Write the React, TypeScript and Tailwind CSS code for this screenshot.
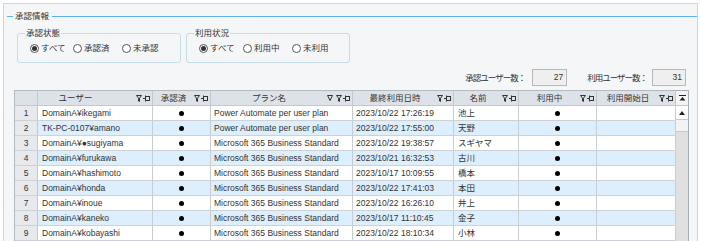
import React from "react";

type Row = { n: number; user: string; plan: string; last: string; name: string };

const PA = "Power Automate per user plan";
const MS = "Microsoft 365 Business Standard";

const rows: Row[] = [
  { n: 1, user: "DomainA¥ikegami", plan: PA, last: "2023/10/22 17:26:19", name: "池上" },
  { n: 2, user: "TK-PC-0107¥amano", plan: PA, last: "2023/10/22 17:55:00", name: "天野" },
  { n: 3, user: "DomainA¥●sugiyama", plan: MS, last: "2023/10/22 19:38:57", name: "スギヤマ" },
  { n: 4, user: "DomainA¥furukawa", plan: MS, last: "2023/10/21 16:32:53", name: "古川" },
  { n: 5, user: "DomainA¥hashimoto", plan: MS, last: "2023/10/17 10:09:55", name: "橋本" },
  { n: 6, user: "DomainA¥honda", plan: MS, last: "2023/10/22 17:41:03", name: "本田" },
  { n: 7, user: "DomainA¥inoue", plan: MS, last: "2023/10/22 16:26:10", name: "井上" },
  { n: 8, user: "DomainA¥kaneko", plan: MS, last: "2023/10/17 11:10:45", name: "金子" },
  { n: 9, user: "DomainA¥kobayashi", plan: MS, last: "2023/10/22 18:10:34", name: "小林" },
];

function Funnel() {
  return (
    <svg width="6" height="7" viewBox="0 0 6 7" fill="none" stroke="#333" strokeWidth="1">
      <path d="M0.5 0.5H5.5L3.5 3.2V6.5L2.5 6V3.2Z" />
    </svg>
  );
}

function Sort() {
  return (
    <svg width="6" height="6" viewBox="0 0 6 6" fill="none" stroke="#333" strokeWidth="1">
      <path d="M0.5 0.5H5.5L3 5.5Z" />
    </svg>
  );
}

function Pin() {
  return (
    <svg width="7" height="7" viewBox="0 0 7 7" fill="none" stroke="#333" strokeWidth="1">
      <path d="M0 3.5H2M2.5 0.5V6.5" />
      <rect x="2.5" y="1.5" width="4" height="4" />
    </svg>
  );
}

function Dot() {
  return <span className="block w-[5px] h-[5px] rounded-full bg-black" />;
}

function Radio({ label, checked, w }: { label: string; checked?: boolean; w?: string }) {
  return (
    <div className={`flex items-center ${w ?? ""}`}>
      <span className="w-[9px] h-[9px] rounded-full border border-[#555] bg-white flex items-center justify-center">
        {checked && <span className="w-[5px] h-[5px] rounded-full bg-[#333]" />}
      </span>
      <span className="ml-[2px] leading-[11px]">{label}</span>
    </div>
  );
}

function Group({ title, children }: { title: string; children: React.ReactNode }) {
  return (
    <div className="relative w-[164px] h-[30px] border border-[#c6dde8] rounded-[3px] flex items-center pl-[12px]">
      <span className="absolute left-[7px] -top-[7px] px-[1px] bg-[#f5f6f7] leading-[12px]">{title}</span>
      {children}
    </div>
  );
}

const cols = [
  { w: "w-[115px]", label: "ユーザー", sort: false, shift: "pr-[23px]" },
  { w: "w-[58px]", label: "承認済", sort: false, shift: "" },
  { w: "w-[142px]", label: "プラン名", sort: true, shift: "" },
  { w: "w-[101px]", label: "最終利用日時", sort: false, shift: "" },
  { w: "w-[65px]", label: "名前", sort: false, shift: "" },
  { w: "w-[78px]", label: "利用中", sort: false, shift: "" },
  { w: "w-[79px]", label: "利用開始日", sort: false, shift: "" },
];

export default function App() {
  return (
    <div className="w-[701px] h-[241px] overflow-hidden bg-white pt-[3px] px-[3px] text-[8.5px] text-[#333] font-['Liberation_Sans','Noto_Sans_CJK_JP',sans-serif]">
      <div className="border border-[#d2d4d6] bg-[#f5f6f7] pb-[20px]">
        {/* section title */}
        <div className="mt-[7px] h-[11px] flex items-center">
          <span className="ml-[3px] w-[6px] h-px bg-[#5fb0ee]" />
          <span className="ml-[2px] leading-[11px]">承認情報</span>
          <span className="ml-[3px] flex-1 h-px bg-[#5fb0ee]" />
        </div>

        {/* filter groups */}
        <div className="mt-[11px] ml-[13px] flex gap-[5px]">
          <Group title="承認状態">
            <Radio label="すべて" checked w="w-[43px]" />
            <Radio label="承認済" w="w-[49px]" />
            <Radio label="未承認" />
          </Group>
          <Group title="利用状況">
            <Radio label="すべて" checked w="w-[44px]" />
            <Radio label="利用中" w="w-[49px]" />
            <Radio label="未利用" />
          </Group>
        </div>

        {/* counts */}
        <div className="mt-[6px] flex items-center justify-end pr-[11px]">
          <span className="tracking-[-1px] leading-[12px]">承認ユーザー数：</span>
          <div className="ml-[7px] w-[35px] h-[17px] border border-[#b8b8b8] bg-[#efefef] text-right pr-[3px] leading-[15px]">27</div>
          <span className="ml-[20px] tracking-[-1px] leading-[12px]">利用ユーザー数：</span>
          <div className="ml-[5px] w-[34px] h-[17px] border border-[#b8b8b8] bg-[#efefef] text-right pr-[3px] leading-[15px]">31</div>
        </div>

        {/* grid */}
        <div className="mt-[4px] ml-[10px] flex">
          <div className="border-l border-t border-[#b5bac0]">
            <div className="flex h-[15px] bg-[#dde2e8] border-b border-[#c3c8ce]">
              <div className="w-[23px] h-full border-r border-[#c3c8ce]" />
              {cols.map((c) => (
                <div key={c.label} className={`${c.w} h-full border-r border-[#c3c8ce] flex items-center`}>
                  <span className={`flex-1 text-center leading-[12px] ${c.shift}`}>{c.label}</span>
                  <span className="flex items-center gap-[1px] pr-[2px]">
                    {c.sort && <span className="mr-[2px] flex"><Sort /></span>}
                    <Funnel />
                    <Pin />
                  </span>
                </div>
              ))}
            </div>
            {rows.map((r, i) => {
              const bg = i % 2 === 0 ? "bg-white" : "bg-[#ddeefd]";
              return (
                <div key={r.n} className={`flex h-[15px] border-b border-[#ccd2d8] ${bg}`}>
                  <div className="w-[23px] h-full border-r border-[#c3c8ce] bg-[#e7e9ec] flex items-center justify-center leading-[12px]">{r.n}</div>
                  <div className="w-[115px] h-full border-r border-[#c8cdd2] flex items-center pl-[4px] leading-[12px] whitespace-nowrap overflow-hidden">{r.user}</div>
                  <div className="w-[58px] h-full border-r border-[#c8cdd2] flex items-center justify-center"><Dot /></div>
                  <div className="w-[142px] h-full border-r border-[#c8cdd2] flex items-center pl-[3px] leading-[12px] whitespace-nowrap overflow-hidden">{r.plan}</div>
                  <div className="w-[101px] h-full border-r border-[#c8cdd2] flex items-center pl-[3px] leading-[12px] whitespace-nowrap overflow-hidden">{r.last}</div>
                  <div className="w-[65px] h-full border-r border-[#c8cdd2] flex items-center pl-[4px] leading-[12px] whitespace-nowrap">{r.name}</div>
                  <div className="w-[78px] h-full border-r border-[#c8cdd2] flex items-center justify-center"><Dot /></div>
                  <div className="w-[79px] h-full border-r border-[#c8cdd2]" />
                </div>
              );
            })}
          </div>

          {/* scrollbar */}
          <div className="w-[13px] border-t border-r border-[#a9aeb4] flex flex-col bg-[#e0e0e0]">
            <div className="h-[15px] bg-[#f4f4f4] border-b border-[#c3c8ce] flex items-center justify-center">
              <svg width="7" height="6" viewBox="0 0 7 6" fill="#222">
                <rect x="0" y="0" width="7" height="1" />
                <path d="M3.5 2L6.5 5.5H0.5Z" />
              </svg>
            </div>
            <div className="h-[14px] bg-white border-b border-[#c8c8c8] flex items-center justify-center">
              <svg width="6" height="4" viewBox="0 0 6 4" fill="#222">
                <path d="M3 0L6 4H0Z" />
              </svg>
            </div>
            <div className="h-[12px] bg-[#f3f3f3] border-b border-[#c8c8c8]" />
            <div className="flex-1" />
          </div>
        </div>
      </div>
    </div>
  );
}
